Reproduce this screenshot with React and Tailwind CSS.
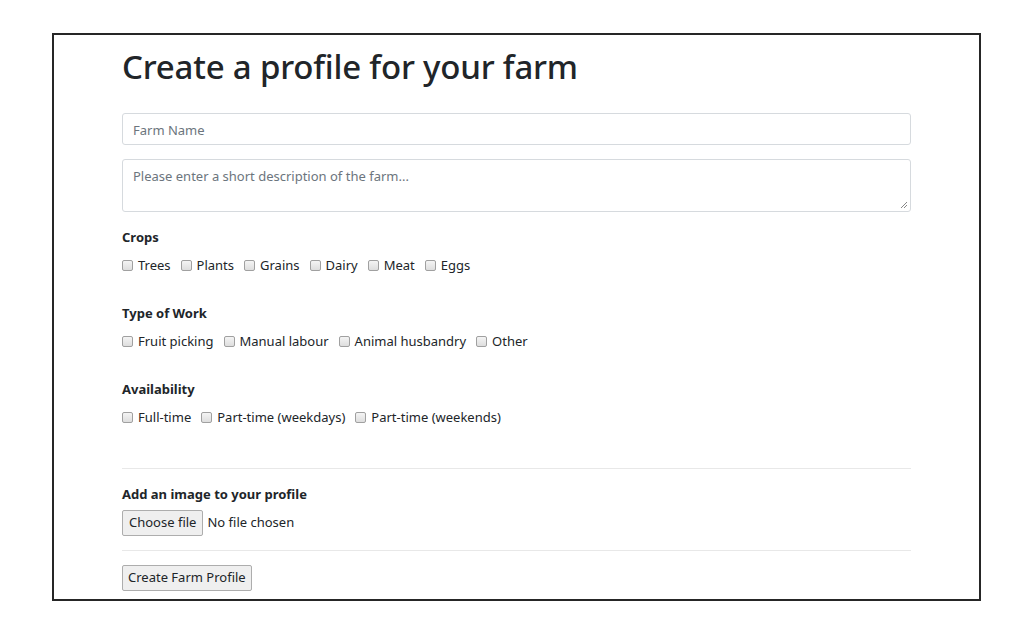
import React from "react";

const font = { fontFamily: '"Noto Sans", "Open Sans", Arial, sans-serif' };

function Box({ label }) {
  return (
    <label className="flex items-center mr-[10px]">
      <span className="inline-block w-[11px] h-[11px] border border-[#a0a0a0] rounded-[2px] bg-gradient-to-b from-[#f4f4f4] to-[#dedede] mr-[5px]" />
      <span className="text-[13px] text-[#212529]">{label}</span>
    </label>
  );
}

function Group({ title, items }) {
  return (
    <div>
      <div className="text-[13px] font-bold text-[#212529] leading-[20px]">{title}</div>
      <div className="flex items-center mt-[8px] leading-[20px]">
        {items.map((i) => (
          <Box key={i} label={i} />
        ))}
      </div>
    </div>
  );
}

export default function App() {
  return (
    <div className="w-[1013px] h-[633px] bg-white pt-[33px] pl-[52px]" style={font}>
      <div className="w-[929px] h-[568px] border-2 border-[#262626] pl-[68px] pr-[68px]">
        <h1 className="text-[33px] leading-[40px] text-[#212529] font-medium mt-[12px] tracking-[-0.2px]">
          Create a profile for your farm
        </h1>
        <div className="mt-[26px] h-[32px] border border-[#d6dade] rounded-[3px] flex items-center px-[10px] pt-[3px] text-[13px] text-[#6c757d]">
          Farm Name
        </div>
        <div className="relative mt-[14px] h-[53px] border border-[#d6dade] rounded-[3px] px-[10px] pt-[7px] text-[13px] text-[#6c757d]">
          Please enter a short description of the farm...
          <svg className="absolute right-[2px] bottom-[2px]" width="8" height="8" viewBox="0 0 8 8">
            <path d="M7 1 L1 7 M7 4 L4 7" stroke="#888" strokeWidth="1" />
          </svg>
        </div>
        <div className="mt-[15px]">
          <Group title="Crops" items={["Trees", "Plants", "Grains", "Dairy", "Meat", "Eggs"]} />
        </div>
        <div className="mt-[28px]">
          <Group title="Type of Work" items={["Fruit picking", "Manual labour", "Animal husbandry", "Other"]} />
        </div>
        <div className="mt-[28px]">
          <Group title="Availability" items={["Full-time", "Part-time (weekdays)", "Part-time (weekends)"]} />
        </div>
        <div className="mt-[41px] border-t border-[#e8e8e8]" />
        <div className="mt-[15px] text-[13px] font-bold text-[#212529] leading-[20px]">Add an image to your profile</div>
        <div className="flex items-center mt-[6px]">
          <span className="h-[26px] px-[6px] border border-[#adadad] bg-[#efefef] rounded-[2px] flex items-center text-[13px] text-[#212529]">
            Choose file
          </span>
          <span className="ml-[4px] text-[13px] text-[#212529]">No file chosen</span>
        </div>
        <div className="mt-[14px] border-t border-[#e8e8e8]" />
        <div className="mt-[14px] flex">
          <span className="h-[26px] px-[5px] border border-[#adadad] bg-[#efefef] rounded-[2px] flex items-center text-[13px] text-[#212529]">
            Create Farm Profile
          </span>
        </div>
      </div>
    </div>
  );
}
